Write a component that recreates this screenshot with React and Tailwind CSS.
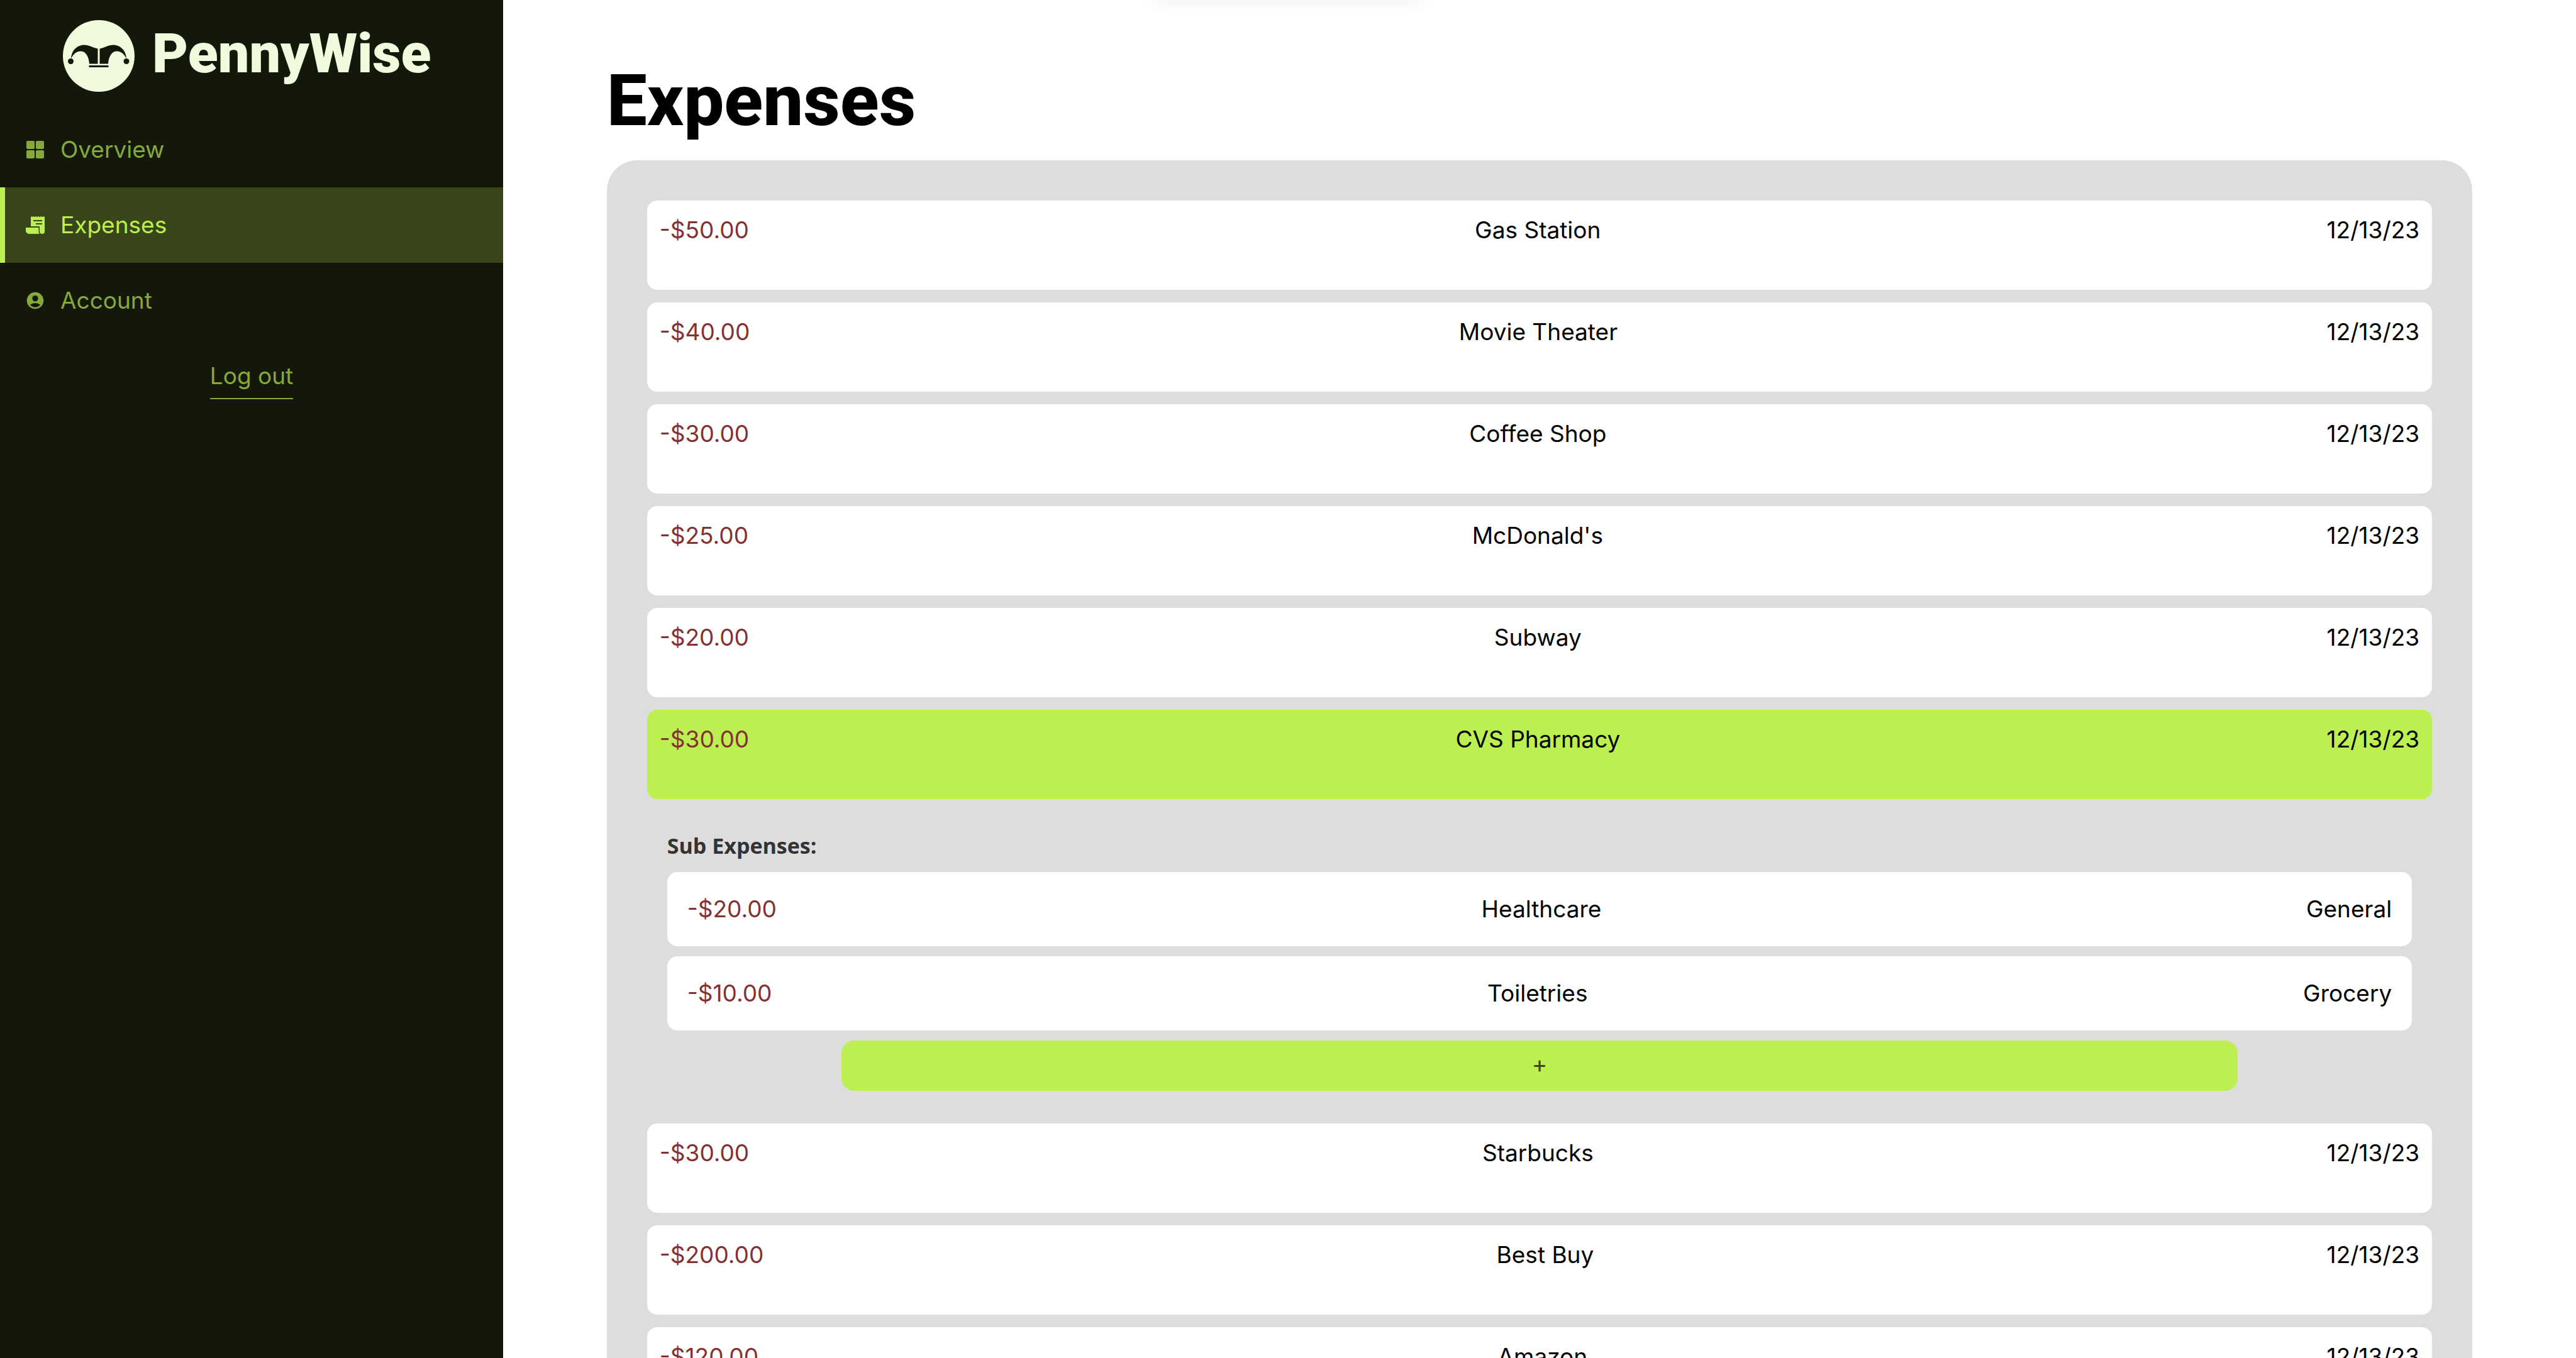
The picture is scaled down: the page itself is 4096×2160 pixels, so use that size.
import { MdAccountCircle } from "react-icons/md";

const expenses = [
  { amount: "-$50.00", name: "Gas Station", date: "12/13/23" },
  { amount: "-$40.00", name: "Movie Theater", date: "12/13/23" },
  { amount: "-$30.00", name: "Coffee Shop", date: "12/13/23" },
  { amount: "-$25.00", name: "McDonald's", date: "12/13/23" },
  { amount: "-$20.00", name: "Subway", date: "12/13/23" },
  {
    amount: "-$30.00",
    name: "CVS Pharmacy",
    date: "12/13/23",
    subs: [
      { amount: "-$20.00", name: "Healthcare", category: "General" },
      { amount: "-$10.00", name: "Toiletries", category: "Grocery" },
    ],
  },
  { amount: "-$30.00", name: "Starbucks", date: "12/13/23" },
  { amount: "-$200.00", name: "Best Buy", date: "12/13/23" },
  { amount: "-$120.00", name: "Amazon", date: "12/13/23" },
];

function OverviewIcon() {
  return (
    <svg viewBox="0 0 32 32" className="size-8 shrink-0" fill="currentColor" aria-hidden="true">
      <rect x="2" y="2" width="13" height="13" rx="2" />
      <rect x="17" y="2" width="13" height="13" rx="2" />
      <rect x="2" y="17" width="13" height="13" rx="2" />
      <rect x="17" y="17" width="13" height="13" rx="2" />
    </svg>
  );
}

function ReceiptIcon() {
  return (
    <svg viewBox="0 0 32 32" className="size-8 shrink-0" fill="currentColor" aria-hidden="true">
      <path d="M9 2l2 1.2L13 2l2 1.2L17 2l2 1.2L21 2l2 1.2L25 2l2 1.2L29 2l1 1.2L31 2v24a4 4 0 0 1-8 0v-8H9z" />
      <path d="M1 20h20.500v6c0 1.600.5 3 1.400 4H6a5 5 0 0 1-5-5z" />
      <path d="M13 9h14M17 14h10" stroke="#384619" strokeWidth="2" />
    </svg>
  );
}

function AccountIcon() {
  return <MdAccountCircle className="size-8 shrink-0" aria-hidden="true" />;
}

function JesterLogo() {
  return (
    <svg viewBox="0 0 114 114" className="size-[114px] shrink-0" aria-hidden="true">
      <circle cx="57" cy="57" r="57" fill="#f1fadc" />
      <g fill="#14180a">
        <path d="M55.500 45.500v24H42C41 57 36 49.500 28 49.500c-7 0-12 5-15 12C13.500 49 22 39.500 34 39.500c8 0 14 4.500 21.500 6z" />
        <path d="M58.500 45.500v24H72C73 57 78 49.500 86 49.500c7 0 12 5 15 12C100.500 49 92 39.500 80 39.500c-8 0-14 4.500-21.500 6z" />
        <circle cx="12.500" cy="65.500" r="4.500" />
        <circle cx="101" cy="65.500" r="4.500" />
        <rect x="41.500" y="72" width="31" height="3" />
      </g>
    </svg>
  );
}

const navItems = [
  { label: "Overview", Icon: OverviewIcon },
  { label: "Expenses", Icon: ReceiptIcon, active: true },
  { label: "Account", Icon: AccountIcon },
];

function Sidebar() {
  return (
    <aside className="flex w-[800px] shrink-0 flex-col bg-[#14180a] text-[#86a93a]">
      <div className="flex h-[178px] items-center gap-7 pl-[100px]">
        <JesterLogo />
        <span className="pb-2 font-['Roboto',sans-serif] text-[88px] leading-none font-black text-[#f1fadc]">
          PennyWise
        </span>
      </div>
      <nav className="flex flex-col">
        {navItems.map(({ label, Icon, active }) => (
          <a
            key={label}
            href="#"
            aria-current={active ? "page" : undefined}
            className={
              active
                ? "flex h-[120px] items-center gap-6 border-l-8 border-[#bcef50] bg-[#384619] pl-8 text-[#bcef50]"
                : "flex h-[120px] items-center gap-6 pl-10"
            }
          >
            <Icon />
            {label}
          </a>
        ))}
      </nav>
      <div className="flex h-[120px] items-center justify-center">
        <button type="button" className="border-b-2 border-[#86a93a] pt-2.5 pb-2">
          Log out
        </button>
      </div>
    </aside>
  );
}

function SubExpenses({ items }) {
  return (
    <section className="flex flex-col gap-4 px-8 pt-7 pb-8">
      <h2 className="font-['Open_Sans',sans-serif] text-[34px] leading-[52px] font-bold text-[#333333]">
        Sub Expenses:
      </h2>
      {items.map((item) => (
        <div key={item.name} className="flex justify-between rounded-2xl bg-white p-8">
          <span className="text-[#823232]">{item.amount}</span>
          <span>{item.name}</span>
          <span>{item.category}</span>
        </div>
      ))}
      <button
        type="button"
        aria-label="Add sub expense"
        className="h-20 w-4/5 self-center rounded-[20px] bg-[#bcef50] pb-1 text-[#384619]"
      >
        +
      </button>
    </section>
  );
}

function ExpenseRow({ expense }) {
  return (
    <li className="flex flex-col gap-5">
      <div
        className={
          expense.subs
            ? "flex justify-between rounded-2xl bg-[#bcef50] px-5 pt-5 pb-[68px]"
            : "flex justify-between rounded-2xl bg-white px-5 pt-5 pb-[68px]"
        }
      >
        <span className="text-[#823232]">{expense.amount}</span>
        <span>{expense.name}</span>
        <time>{expense.date}</time>
      </div>
      {expense.subs && <SubExpenses items={expense.subs} />}
    </li>
  );
}

export default function App() {
  return (
    <div className="relative flex h-screen overflow-hidden bg-white font-['Inter',sans-serif] text-[37px] leading-[54px] text-black">
      <div className="absolute -top-2 left-1/2 h-2 w-[430px] -translate-x-1/2 rounded-lg shadow-[0_0_24px_rgba(0,0,0,0.12)]" />
      <Sidebar />
      <main className="min-w-0 flex-1">
        <div className="mx-auto w-9/10 pt-24">
          <h1 className="pb-[31px] font-['Roboto',sans-serif] text-[114px] leading-[128px] font-extrabold">Expenses</h1>
          <ul className="flex flex-col gap-5 rounded-[48px] bg-[#dddddd] p-16">
            {expenses.map((expense, i) => (
              <ExpenseRow key={i} expense={expense} />
            ))}
          </ul>
        </div>
      </main>
    </div>
  );
}
